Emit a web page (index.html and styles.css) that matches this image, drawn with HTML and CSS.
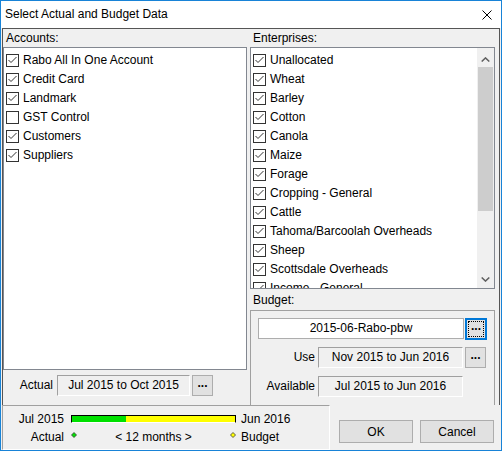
FILE: index.html
```html
<!DOCTYPE html>
<html>
<head>
<meta charset="utf-8">
<link rel="stylesheet" href="styles.css">
</head>
<body>
<div class="window">
  <div class="titlebar">
    <span class="title">Select Actual and Budget Data</span>
    <svg class="close" width="10" height="10" viewBox="0 0 10 10"><path d="M0.5 0.5 L9.5 9.5 M9.5 0.5 L0.5 9.5" stroke="#000" stroke-width="1" fill="none"/></svg>
  </div>
  <div class="client">
    <div class="main">
      <div class="col col-left">
        <div class="hdr">Accounts:</div>
        <div class="list list-acc">
          <div class="items">
            <div class="item"><svg class="cb" width="13" height="13" viewBox="0 0 13 13"><rect x="0.5" y="0.5" width="12" height="12" fill="#fff" stroke="#333"/><path d="M2.5 6 L5 8.5 L10.5 3" fill="none" stroke="#333"/></svg>Rabo All In One Account</div>
            <div class="item"><svg class="cb" width="13" height="13" viewBox="0 0 13 13"><rect x="0.5" y="0.5" width="12" height="12" fill="#fff" stroke="#333"/><path d="M2.5 6 L5 8.5 L10.5 3" fill="none" stroke="#333"/></svg>Credit Card</div>
            <div class="item"><svg class="cb" width="13" height="13" viewBox="0 0 13 13"><rect x="0.5" y="0.5" width="12" height="12" fill="#fff" stroke="#333"/><path d="M2.5 6 L5 8.5 L10.5 3" fill="none" stroke="#333"/></svg>Landmark</div>
            <div class="item"><svg class="cb" width="13" height="13" viewBox="0 0 13 13"><rect x="0.5" y="0.5" width="12" height="12" fill="#fff" stroke="#333"/></svg>GST Control</div>
            <div class="item"><svg class="cb" width="13" height="13" viewBox="0 0 13 13"><rect x="0.5" y="0.5" width="12" height="12" fill="#fff" stroke="#333"/><path d="M2.5 6 L5 8.5 L10.5 3" fill="none" stroke="#333"/></svg>Customers</div>
            <div class="item"><svg class="cb" width="13" height="13" viewBox="0 0 13 13"><rect x="0.5" y="0.5" width="12" height="12" fill="#fff" stroke="#333"/><path d="M2.5 6 L5 8.5 L10.5 3" fill="none" stroke="#333"/></svg>Suppliers</div>
          </div>
        </div>
        <div class="actual-row">
          <span class="lbl-actual">Actual</span>
          <div class="field f-actual">Jul 2015 to Oct 2015</div>
          <button class="dots">...</button>
        </div>
      </div>
      <div class="col col-right">
        <div class="hdr">Enterprises:</div>
        <div class="list list-ent">
          <div class="items">
            <div class="item"><svg class="cb" width="13" height="13" viewBox="0 0 13 13"><rect x="0.5" y="0.5" width="12" height="12" fill="#fff" stroke="#333"/><path d="M2.5 6 L5 8.5 L10.5 3" fill="none" stroke="#333"/></svg>Unallocated</div>
            <div class="item"><svg class="cb" width="13" height="13" viewBox="0 0 13 13"><rect x="0.5" y="0.5" width="12" height="12" fill="#fff" stroke="#333"/><path d="M2.5 6 L5 8.5 L10.5 3" fill="none" stroke="#333"/></svg>Wheat</div>
            <div class="item"><svg class="cb" width="13" height="13" viewBox="0 0 13 13"><rect x="0.5" y="0.5" width="12" height="12" fill="#fff" stroke="#333"/><path d="M2.5 6 L5 8.5 L10.5 3" fill="none" stroke="#333"/></svg>Barley</div>
            <div class="item"><svg class="cb" width="13" height="13" viewBox="0 0 13 13"><rect x="0.5" y="0.5" width="12" height="12" fill="#fff" stroke="#333"/><path d="M2.5 6 L5 8.5 L10.5 3" fill="none" stroke="#333"/></svg>Cotton</div>
            <div class="item"><svg class="cb" width="13" height="13" viewBox="0 0 13 13"><rect x="0.5" y="0.5" width="12" height="12" fill="#fff" stroke="#333"/><path d="M2.5 6 L5 8.5 L10.5 3" fill="none" stroke="#333"/></svg>Canola</div>
            <div class="item"><svg class="cb" width="13" height="13" viewBox="0 0 13 13"><rect x="0.5" y="0.5" width="12" height="12" fill="#fff" stroke="#333"/><path d="M2.5 6 L5 8.5 L10.5 3" fill="none" stroke="#333"/></svg>Maize</div>
            <div class="item"><svg class="cb" width="13" height="13" viewBox="0 0 13 13"><rect x="0.5" y="0.5" width="12" height="12" fill="#fff" stroke="#333"/><path d="M2.5 6 L5 8.5 L10.5 3" fill="none" stroke="#333"/></svg>Forage</div>
            <div class="item"><svg class="cb" width="13" height="13" viewBox="0 0 13 13"><rect x="0.5" y="0.5" width="12" height="12" fill="#fff" stroke="#333"/><path d="M2.5 6 L5 8.5 L10.5 3" fill="none" stroke="#333"/></svg>Cropping - General</div>
            <div class="item"><svg class="cb" width="13" height="13" viewBox="0 0 13 13"><rect x="0.5" y="0.5" width="12" height="12" fill="#fff" stroke="#333"/><path d="M2.5 6 L5 8.5 L10.5 3" fill="none" stroke="#333"/></svg>Cattle</div>
            <div class="item"><svg class="cb" width="13" height="13" viewBox="0 0 13 13"><rect x="0.5" y="0.5" width="12" height="12" fill="#fff" stroke="#333"/><path d="M2.5 6 L5 8.5 L10.5 3" fill="none" stroke="#333"/></svg>Tahoma/Barcoolah Overheads</div>
            <div class="item"><svg class="cb" width="13" height="13" viewBox="0 0 13 13"><rect x="0.5" y="0.5" width="12" height="12" fill="#fff" stroke="#333"/><path d="M2.5 6 L5 8.5 L10.5 3" fill="none" stroke="#333"/></svg>Sheep</div>
            <div class="item"><svg class="cb" width="13" height="13" viewBox="0 0 13 13"><rect x="0.5" y="0.5" width="12" height="12" fill="#fff" stroke="#333"/><path d="M2.5 6 L5 8.5 L10.5 3" fill="none" stroke="#333"/></svg>Scottsdale Overheads</div>
            <div class="item"><svg class="cb" width="13" height="13" viewBox="0 0 13 13"><rect x="0.5" y="0.5" width="12" height="12" fill="#fff" stroke="#333"/><path d="M2.5 6 L5 8.5 L10.5 3" fill="none" stroke="#333"/></svg>Income - General</div>
          </div>
          <div class="scrollbar">
            <div class="sb-btn sb-up"><svg width="9" height="5" viewBox="0 0 9 5"><path d="M0.7 4.5 L4.5 0.9 L8.3 4.5" fill="none" stroke="#606060" stroke-width="1.5"/></svg></div>
            <div class="thumb"></div>
            <div class="sb-track"></div>
            <div class="sb-btn sb-down"><svg width="9" height="5" viewBox="0 0 9 5"><path d="M0.7 0.5 L4.5 4.1 L8.3 0.5" fill="none" stroke="#606060" stroke-width="1.5"/></svg></div>
          </div>
        </div>
        <div class="budget-hdr">Budget:</div>
        <div class="budget">
          <div class="row row-name">
            <div class="field f-name">2015-06-Rabo-pbw</div>
            <button class="dots focus">...</button>
          </div>
          <div class="row row-use">
            <span class="lbl">Use</span>
            <div class="field f-use">Nov 2015 to Jun 2016</div>
            <button class="dots">...</button>
          </div>
          <div class="row row-avail">
            <span class="lbl">Available</span>
            <div class="field f-use">Jul 2015 to Jun 2016</div>
          </div>
        </div>
      </div>
    </div>
    <div class="bottom">
      <div class="timeline">
        <div class="tl-row">
          <span class="tl-lbl">Jul 2015</span>
          <div class="tl-mid">
            <div class="bar"><div class="bar-act"></div><div class="bar-bud"></div></div>
          </div>
          <span class="tl-end">Jun 2016</span>
        </div>
        <div class="tl-row">
          <span class="tl-lbl">Actual</span>
          <div class="tl-mid tl-legend">
            <svg class="dia" width="6" height="6" viewBox="0 0 6 6"><path d="M3 0.5 L5.5 3 L3 5.5 L0.5 3 Z" fill="#00e000" stroke="#3a3a3a" stroke-width="0.8"/></svg>
            <span class="months">&lt; 12 months &gt;</span>
            <svg class="dia" width="6" height="6" viewBox="0 0 6 6"><path d="M3 0.5 L5.5 3 L3 5.5 L0.5 3 Z" fill="#ffff00" stroke="#3a3a3a" stroke-width="0.8"/></svg>
          </div>
          <span class="tl-end">Budget</span>
        </div>
      </div>
      <div class="btns">
        <button class="btn">OK</button>
        <button class="btn">Cancel</button>
      </div>
    </div>
  </div>
</div>
</body>
</html>
```

FILE: styles.css
```css
* {
  box-sizing: border-box;
  margin: 0;
  padding: 0;
}

body {
  margin: 0;
  width: 502px;
  height: 451px;
  overflow: hidden;
  font-family: "Liberation Sans", Arial, sans-serif;
  font-size: 12px;
  color: #000;
  background: #fff;
}

.window {
  width: 502px;
  height: 451px;
  border: 1px solid #1883d7;
  display: flex;
  flex-direction: column;
  background: #f0f0f0;
}

.titlebar {
  height: 27px;
  flex-shrink: 0;
  background: #fff;
  display: flex;
  align-items: center;
  padding-left: 4px;
  padding-bottom: 2px;
}

.title {
  white-space: nowrap;
}

.close {
  margin-left: auto;
  margin-right: 9px;
  margin-top: 2px;
}

.client {
  flex: 1;
  padding: 0 1px;
  display: flex;
  flex-direction: column;
}

.main {
  height: 377px;
  flex-shrink: 0;
  border: 1px solid #555;
  border-bottom: none;
  display: flex;
}

.col {
  display: flex;
  flex-direction: column;
}

.col-left {
  width: 244px;
}

.col-right {
  width: 249px;
  margin-left: 3px;
  padding-right: 4px;
}

.hdr {
  height: 18px;
  line-height: 18px;
  padding-left: 3px;
  flex-shrink: 0;
}

.list {
  border: 1px solid #828790;
  background: #fff;
  overflow: hidden;
  flex-shrink: 0;
}

.list-acc {
  height: 323px;
}

.list-ent {
  height: 242px;
  width: 245px;
  display: flex;
}

.items {
  flex: 1;
  padding-top: 3px;
  overflow: hidden;
}

.item {
  height: 19px;
  line-height: 19px;
  display: flex;
  align-items: center;
  padding-left: 2px;
  white-space: nowrap;
}

.cb {
  flex-shrink: 0;
  margin-right: 4px;
}

.scrollbar {
  width: 17px;
  background: #f0f0f0;
  display: flex;
  flex-direction: column;
  align-items: center;
}

.sb-btn {
  width: 17px;
  display: flex;
  justify-content: center;
  align-items: center;
}

.sb-up {
  height: 19px;
  padding-top: 3px;
}

.sb-down {
  height: 18px;
  padding-top: 1px;
}

.thumb {
  width: 15px;
  height: 144px;
  background: #cdcdcd;
}

.sb-track {
  flex: 1;
}

.actual-row {
  flex: 1;
  display: flex;
  align-items: flex-start;
  padding-top: 5px;
}

.lbl-actual {
  width: 54px;
  text-align: right;
  padding-right: 4px;
  line-height: 21px;
}

.field {
  height: 21px;
  line-height: 19px;
  text-align: center;
  border: 1px solid;
  border-color: #a0a0a0 #fff #fff #a0a0a0;
  background: #f0f0f0;
  white-space: nowrap;
  flex-shrink: 0;
}

.f-actual {
  width: 133px;
}

.dots {
  width: 21px;
  height: 21px;
  margin-left: 2px;
  background: #e1e1e1;
  border: 1px solid #adadad;
  font-family: "Liberation Sans", Arial, sans-serif;
  font-weight: bold;
  font-size: 12px;
  line-height: 12px;
  padding-bottom: 6px;
  text-align: center;
  color: #000;
  flex-shrink: 0;
}

.dots.focus {
  width: 22px;
  height: 22px;
  margin-left: 1px;
  border: 2px solid #0078d7;
  outline: 1px dotted #000;
  outline-offset: -4px;
}

.budget-hdr {
  height: 21px;
  padding-top: 2px;
  line-height: 19px;
  padding-left: 3px;
  flex-shrink: 0;
}

.budget {
  flex: 1;
  width: 245px;
  border: 1px solid #a0a0a0;
  border-bottom: none;
  padding-top: 7px;
  display: flex;
  flex-direction: column;
}

.row {
  display: flex;
  align-items: flex-start;
}

.row-name {
  padding-left: 7px;
}

.f-name {
  width: 206px;
  background: #fff;
  border-color: #adadad;
}

.row-use {
  margin-top: 7px;
}

.row-avail {
  margin-top: 8px;
}

.lbl {
  width: 67px;
  text-align: right;
  padding-right: 3px;
  line-height: 21px;
  flex-shrink: 0;
}

.f-use {
  width: 145px;
}

.bottom {
  flex: 1;
  display: flex;
}

.timeline {
  width: 328px;
  border: 1px solid;
  border-color: #a0a0a0 #fff #fff #a0a0a0;
  padding-top: 4px;
}

.tl-row {
  display: flex;
  height: 18px;
  line-height: 18px;
}

.tl-lbl {
  width: 61px;
  text-align: right;
}

.tl-mid {
  width: 165px;
  margin-left: 7px;
  margin-right: 5px;
}

.tl-end {
  white-space: nowrap;
}

.bar {
  margin-top: 5px;
  height: 8px;
  display: flex;
  border-top: 1px solid #000;
  border-left: 1px solid #000;
  border-right: 1px solid #000;
  border-bottom: 1px solid #fff;
}

.bar-act {
  flex: 4;
  background: #00e000;
}

.bar-bud {
  flex: 8;
  background: #ffff00;
}

.tl-legend {
  display: flex;
  align-items: flex-start;
}

.dia {
  margin-top: 4px;
  flex-shrink: 0;
}

.months {
  flex: 1;
  text-align: center;
}

.btns {
  flex: 1;
  display: flex;
  align-items: flex-start;
  gap: 7px;
  padding: 15px 0 0 9px;
}

.btn {
  width: 74px;
  height: 23px;
  background: #e1e1e1;
  border: 1px solid #adadad;
  font-family: "Liberation Sans", Arial, sans-serif;
  font-size: 12px;
  color: #000;
}
```
